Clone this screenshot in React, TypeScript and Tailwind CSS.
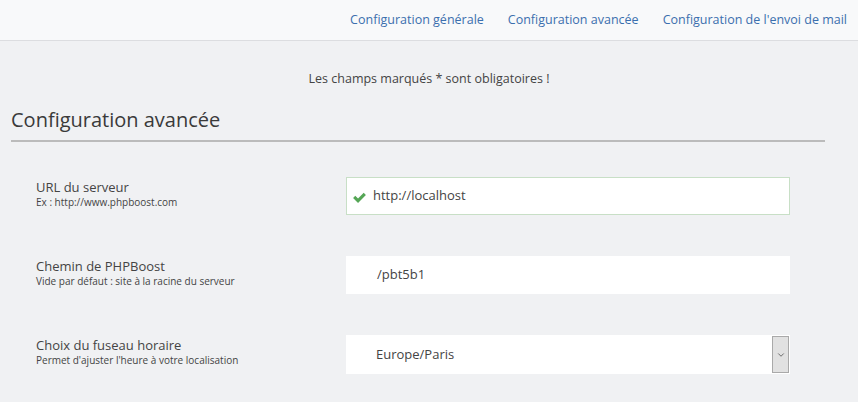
import { ChevronDown } from "lucide-react";

const font = { fontFamily: '"Open Sans", "DejaVu Sans", sans-serif' };

function Row({
  label,
  hint,
  children,
}: {
  label: string;
  hint: string;
  children: React.ReactNode;
}) {
  return (
    <div className="flex items-start">
      <div className="w-[335px] pl-[25px] pt-[2px] flex flex-col">
        <span className="text-[13px] leading-[16px] text-[#444]">{label}</span>
        <span className="text-[10px] leading-[15px] text-[#444]">{hint}</span>
      </div>
      <div className="w-[444px]">{children}</div>
    </div>
  );
}

export default function App() {
  return (
    <div className="w-[858px] h-[402px] bg-[#f0f1f3] overflow-hidden" style={font}>
      {/* top nav */}
      <div className="h-[41px] bg-[#f8f9fa] border-b border-[#dcdde0] flex items-center justify-end gap-[24px] pr-[11px]">
        <a className="text-[12.5px] text-[#3b6fae]">Configuration générale</a>
        <a className="text-[12.5px] text-[#3b6fae]">Configuration avancée</a>
        <a className="text-[12.5px] text-[#3b6fae]">Configuration de l'envoi de mail</a>
      </div>

      <div className="pl-[11px] pr-[33px]">
        <p className="text-center text-[12.5px] text-[#444] mt-[29px] leading-[18px] pl-[22px]">
          Les champs marqués * sont obligatoires !
        </p>

        <h1 className="mt-[18px] text-[20px] leading-[28px] text-[#3a3a3a] pb-[6px] border-b-2 border-[#bbbbbb]">
          Configuration avancée
        </h1>

        <div className="mt-[35px] flex flex-col gap-[41px]">
          <Row label="URL du serveur" hint="Ex : http://www.phpboost.com">
            <div className="h-[38px] bg-white border border-[#c8dfc6] flex items-center pl-[6px]">
              <svg width="13" height="11" viewBox="0 0 14 12" className="mt-[2px]">
                <polygon points="0,6.5 2.4,4.1 5.4,7.1 11.6,0.9 14,3.3 5.4,11.9" fill="#55a656" />
              </svg>
              <span className="ml-[7px] text-[13px] text-[#444]">http://localhost</span>
            </div>
          </Row>
          <Row label="Chemin de PHPBoost" hint="Vide par défaut : site à la racine du serveur">
            <div className="h-[38px] bg-white flex items-center pl-[31px]">
              <span className="text-[13px] text-[#444]">/pbt5b1</span>
            </div>
          </Row>
          <Row label="Choix du fuseau horaire" hint="Permet d'ajuster l'heure à votre localisation">
            <div className="h-[39px] bg-white flex items-center justify-between pl-[30px] pr-[1px]">
              <span className="text-[13px] text-[#444]">Europe/Paris</span>
              <div className="w-[17px] h-[37px] bg-[#e1e1e1] border border-[#a9a9a9] flex items-center justify-center">
                <ChevronDown className="w-[10px] h-[10px] text-[#555]" strokeWidth={2} />
              </div>
            </div>
          </Row>
        </div>
      </div>
    </div>
  );
}
